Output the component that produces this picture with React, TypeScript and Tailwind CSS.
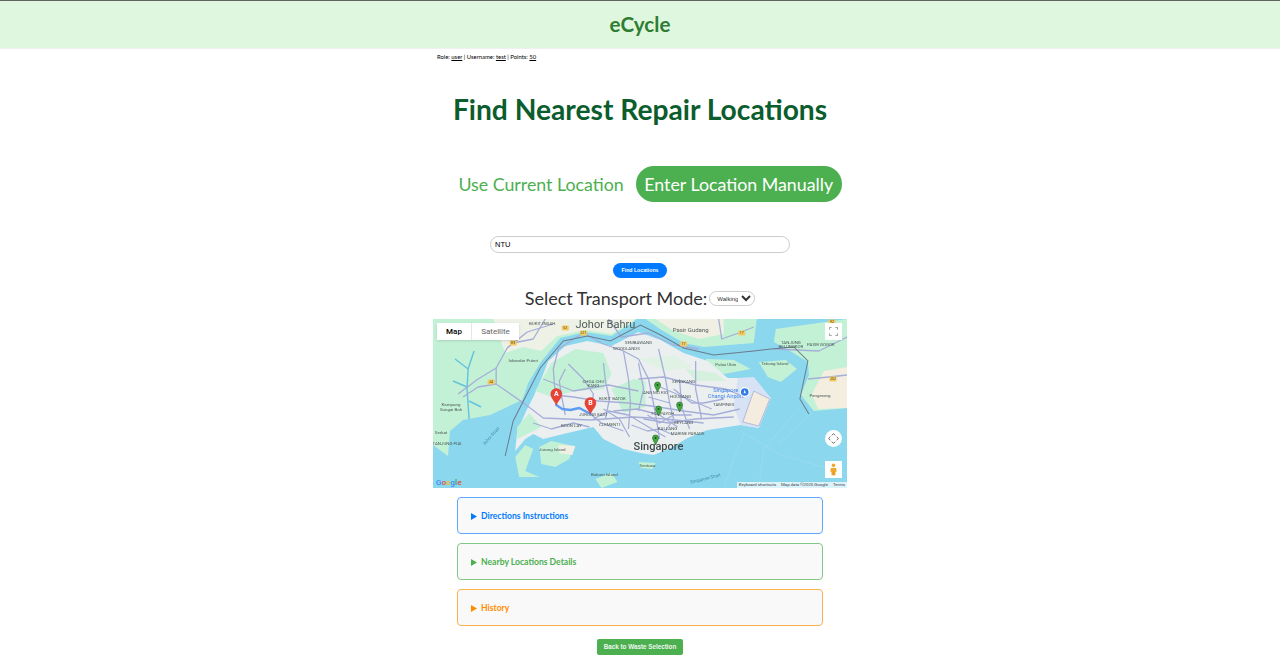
import React from "react";

const LAND = "#c3f1d6";
const URBAN = "#eceff0";
const WATER = "#8bd7ee";
const ROAD = "#a6aed8";

// small map labels: x, y, text
const labels: [number, number, string][] = [
  [109, 6, "BUKIT INDAH"],
  [90, 43, "Iskandar Puteri"],
  [18, 87, "Kampong"],
  [18, 92, "Sungai Boh"],
  [14, 126, "TANJUNG PIAI"],
  [8, 115, "Serkat"],
  [119, 132, "Jurong Island"],
  [171, 157, "Bukom Island"],
  [138, 108, "BOON LAY"],
  [160, 97, "JURONG EAST"],
  [176, 107, "CLEMENTI"],
  [179, 81, "BUKIT BATOK"],
  [160, 64, "CHOA CHU"],
  [160, 68, "KANG"],
  [193, 31, "WOODLANDS"],
  [205, 25, "SEMBAWANG"],
  [292, 47, "Pulau Ubin"],
  [341, 46, "Tekong Island"],
  [357, 25, "TANJUNG"],
  [357, 29, "BELUNGKOR"],
  [387, 27, "PASIR GOGOK"],
  [386, 78, "Pengerang"],
  [290, 87, "TAMPINES"],
  [250, 64, "SENGKANG"],
  [247, 79, "HOUGANG"],
  [222, 75, "ANG MO KIO"],
  [229, 96, "TOA PAYOH"],
  [250, 105, "GEYLANG"],
  [234, 111, "KALLANG"],
  [254, 116, "MARINE PARADE"],
  [214, 148, "Sentosa"],
];

const shields: [number, number, string][] = [
  [132, 9, "52"],
  [150, 14, "J21"],
  [80, 24, "E3"],
  [58, 63, "J4"],
  [308, 14, "17"],
  [250, 25, "17"],
  [398, 3, "92"],
  [399, 60, "J52"],
];

const roads = [
  "M120 5 L94 13 L74 29 L63 49 L63 65 L93 86 L110 99 L157 101 L200 98 L232 100 L270 104",
  "M63 49 L45 60 L25 75",
  "M63 65 L45 68 L30 78",
  "M112 0 L100 20 L80 24 L74 29",
  "M150 14 L125 30 L120 50 L122 76",
  "M150 14 L170 25 L190 32 L205 40 L215 60 L222 95 L226 120",
  "M135 45 L150 60 L160 75 L157 95 L168 104 L190 112",
  "M122 76 L140 78 L165 82 L195 84 L225 88 L250 92 L280 96 L306 90",
  "M190 32 L195 60 L197 84 L195 110",
  "M205 60 L230 58 L262 66 L292 70 L306 76",
  "M246 60 L248 88 L256 110",
  "M222 66 L250 78 L278 90",
  "M210 100 L235 104 L262 100 L300 98",
  "M175 0 L188 18 L215 14 L240 26 L265 30",
  "M285 0 L288 20 L305 14 L320 8",
  "M110 60 L140 72 L175 66 L205 72",
  "M170 90 L186 100 L196 118",
  "M160 100 L175 92 L195 96 L215 108 L232 118",
  "M215 78 L236 84 L240 100 L232 112",
  "M340 30 L385 32 L413 18",
  "M374 60 L395 58 L413 56",
  "M132 50 L126 62 L128 76 L132 96",
  "M170 44 L172 62 L176 80 L172 100",
  "M205 44 L210 70 L205 92",
  "M225 30 L232 60 L236 84",
  "M262 42 L262 70 L268 100",
  "M180 92 L204 90 L226 96 L244 108",
  "M214 96 L226 104 L240 96 L258 96",
  "M198 106 L214 112 L226 110 L240 116",
  "M240 70 L258 84 L270 84 L290 80",
  "M100 104 L118 110 L140 104 L156 108",
];

const MapArt = () => (
  <svg viewBox="0 0 413 169" preserveAspectRatio="none" className="block h-full w-full blur-[0.4px]" fontFamily="Roboto, sans-serif">
    <rect width="413" height="169" fill={WATER} />
    {/* johor side */}
    <path d="M0 0 L203 0 L200 3 L178 17 L152 13 L127 19 L107 44 L95 64 L89 81 L57 96 L30 101 L17 112 L15 137 L0 126 Z" fill={LAND} />
    <path d="M60 0 L202 0 L198 3 L178 15 L152 11 L124 17 L108 32 L90 28 L72 34 Z" fill="#eef1e6" />
    <path d="M212 0 L323 0 L320 24 L270 28 L250 24 L228 11 Z" fill={LAND} />
    <path d="M222 0 L290 0 L290 15 L265 20 L240 12 Z" fill="#f0efe4" />
    <path d="M342 10 L413 0 L413 89 L380 92 L367 76 L375 56 L374 43 L353 30 L340 23 Z" fill={LAND} />
    <path d="M390 52 L413 48 L413 89 L384 90 L378 75 Z" fill="#f3eee0" />
    <path d="M41 32 L35 50 L34 70 L36 100 M35 50 L22 40 M34 68 L20 62 M36 82 L48 88" fill="none" stroke="#62c3da" strokeWidth="1.4" />
    {/* islands */}
    <path d="M272 40 L300 41 L317 50 L290 55 L276 50 Z" fill={LAND} />
    <path d="M325 43 L352 41 L363 50 L347 63 L334 58 Z" fill={LAND} />
    {/* singapore */}
    <path d="M82 132 L84 112 L93 92 L101 76 L108 60 L115 42 L132 27 L154 22 L178 27 L205 13 L227 21 L250 34 L274 42 L294 59 L317 59 L337 79 L325 109 L307 106 L274 111 L254 119 L237 129 L220 136 L207 134 L190 130 L170 120 L160 108 L130 115 L110 120 L100 115 L92 120 Z" fill={URBAN} />
    <path d="M102 72 L118 44 L142 30 L170 34 L178 55 L170 70 L142 72 L118 78 Z" fill={LAND} />
    <path d="M178 70 L200 60 L212 62 L212 88 L190 94 Z" fill={LAND} />
    <path d="M84 120 L84 108 L96 94 L108 108 L100 112 Z" fill={LAND} />
    <path d="M205 40 L240 36 L258 48 L232 52 Z" fill="#dff2e4" />
    <path d="M252 50 L282 54 L292 62 L262 62 Z" fill="#d5f0dd" />
    <path d="M106 128 L118 122 L140 127 L136 140 L122 148 L108 145 Z" fill={LAND} />
    <path d="M125 126 L142 127 L139 136 L126 134 Z" fill="#f0efe4" />
    <path d="M82 138 L92 126 L100 130 L92 152 L106 158 L86 158 Z" fill={LAND} />
    <path d="M162 160 L178 154 L184 163 L168 169 Z" fill={LAND} />
    <path d="M205 143 L222 144 L219 150 L207 149 Z" fill={LAND} />
    <path d="M304 59 L320 58 L337 79 L325 109 L307 106 L300 88 Z" fill="#d7e3f4" />
    <path d="M320 72 L336 80 L325 107 L309 103 Z" fill="#f3ecdf" stroke="#a6aed8" strokeWidth="0.8" />
    {roads.map((d, i) => (
      <path key={i} d={d} fill="none" stroke={ROAD} strokeWidth="1.3" strokeLinejoin="round" />
    ))}
    {/* ferry lines */}
    <path d="M307 112 L345 135 L413 155 M310 115 L300 140 L290 169 M360 95 L330 130 L325 169 M380 92 L345 125" fill="none" stroke="#a3def0" strokeWidth="0.6" />
    {/* border */}
    <path d="M72 137 L80 102 L107 49 L130 22 L154 17 L177 22 L207 6 L227 16 L250 29 L280 36 L320 32 L337 30 L360 28 L374 42 L366 80 L375 95" fill="none" stroke="#6a7b8c" strokeWidth="1" />
    {labels.map(([x, y, t]) => (
      <text key={t} x={x} y={y} fontSize="4.4" textAnchor="middle" fill="#4d5a58">{t}</text>
    ))}
    {shields.map(([x, y, t]) => (
      <g key={`${x}-${t}`}>
        <rect x={x - 3.5} y={y - 2.5} width="7" height="5" rx="1" fill="#f4cb62" />
        <text x={x} y={y + 1.4} fontSize="3.6" textAnchor="middle" fill="#5a4a20">{t}</text>
      </g>
    ))}
    <text x="172" y="9" fontSize="11" textAnchor="middle" fill="#4f5b5a">Johor Bahru</text>
    <text x="257" y="13" fontSize="6" textAnchor="middle" fill="#4f5b5a">Pasir Gudang</text>
    <text x="225" y="131" fontSize="11" fontWeight="500" textAnchor="middle" fill="#3f4a4a">Singapore</text>
    <text x="292" y="73" fontSize="5.6" textAnchor="middle" fill="#3f83e8">Singapore</text>
    <text x="292" y="79" fontSize="5.6" textAnchor="middle" fill="#3f83e8">Changi Airport</text>
    <circle cx="311" cy="73" r="5" fill="#fff" />
    <circle cx="311" cy="73" r="3.8" fill="#2f7be5" />
    <path d="M311 70.5 L312.2 74.5 L311 74 L309.8 74.5 Z" fill="#fff" />
    <text transform="translate(59 118) rotate(-48)" fontSize="4.4" textAnchor="middle" fill="#3d8ba5">Johor Strait</text>
    <text transform="translate(272 161) rotate(-14)" fontSize="4.4" textAnchor="middle" fill="#3d8ba5">Singapore Strait</text>
    {/* route */}
    <path d="M123 86 L129 90 L137 91 L146 89 L157 95" fill="none" stroke="#5f9df2" strokeWidth="2.4" strokeLinejoin="round" strokeLinecap="round" />
    {/* green markers */}
    {[
      [224, 67],
      [225, 91],
      [246, 87],
      [222, 120],
    ].map(([x, y]) => (
      <g key={`${x}-${y}`}>
        <path d={`M${x} ${y + 6} C${x - 1} ${y + 3} ${x - 3} ${y + 1} ${x - 3} ${y - 1} A3 3 0 1 1 ${x + 3} ${y - 1} C${x + 3} ${y + 1} ${x + 1} ${y + 3} ${x} ${y + 6} Z`} fill="#3fae3c" stroke="#2b5a33" strokeWidth="0.6" />
        <circle cx={x} cy={y - 1} r="1" fill="#1f4d28" />
      </g>
    ))}
    {/* route pins */}
    {[
      [123, 76, "A"],
      [157, 85, "B"],
    ].map(([x, y, t]) => {
      const px = x as number;
      const py = y as number;
      return (
        <g key={t as string}>
          <path d={`M${px} ${py + 10} C${px - 1.5} ${py + 6} ${px - 5.5} ${py + 3} ${px - 5.5} ${py - 1} A5.5 5.5 0 1 1 ${px + 5.5} ${py - 1} C${px + 5.5} ${py + 3} ${px + 1.5} ${py + 6} ${px} ${py + 10} Z`} fill="#ea4335" stroke="#c5221f" strokeWidth="0.4" />
          <text x={px} y={py + 1.5} fontSize="7" fontWeight="700" textAnchor="middle" fill="#fff">{t}</text>
        </g>
      );
    })}
    <text x="3" y="166" fontSize="8" fontWeight="500">
      <tspan fill="#4285f4">G</tspan>
      <tspan fill="#ea4335">o</tspan>
      <tspan fill="#fbbc05">o</tspan>
      <tspan fill="#4285f4">g</tspan>
      <tspan fill="#34a853">l</tspan>
      <tspan fill="#ea4335">e</tspan>
    </text>
  </svg>
);

const MapControls = () => (
  <>
    <div className="absolute left-[4px] top-[4px] flex h-[17px] w-[82px] bg-white text-[8px] font-['Roboto',sans-serif] shadow-sm">
      <div className="flex w-[35px] items-center justify-center border-r border-[#e6e6e6] font-medium text-black">Map</div>
      <div className="flex flex-1 items-center justify-center text-[#666]">Satellite</div>
    </div>
    <div className="absolute right-[5px] top-[4px] flex h-[17px] w-[17px] items-center justify-center bg-white">
      <svg viewBox="0 0 10 10" className="h-[9px] w-[9px]" fill="none" stroke="#888" strokeWidth="0.9">
        <path d="M.5 3V.5H3M7 .5h2.5V3M9.5 7v2.5H7M3 9.5H.5V7" />
      </svg>
    </div>
    <div className="absolute right-[5px] top-[111px] flex h-[17px] w-[17px] items-center justify-center rounded-full bg-white">
      <svg viewBox="0 0 12 12" className="h-[11px] w-[11px]" fill="none" stroke="#666" strokeWidth="1">
        <path d="M4 2.5L6 .8l2 1.7M4 9.5l2 1.7 2-1.7M2.5 4L.8 6l1.7 2M9.5 4l1.7 2-1.7 2" />
      </svg>
    </div>
    <div className="absolute right-[5px] top-[142px] flex h-[17px] w-[17px] items-center justify-center bg-white">
      <svg viewBox="0 0 10 14" className="h-[13px] w-[9px]">
        <circle cx="5" cy="2.4" r="2" fill="#f2a72e" />
        <path d="M2 5.2h6l.6 4.3H7.2V13.5H2.8V9.5H1.4Z" fill="#f2a72e" />
        <path d="M5 9v4.5" stroke="#c9821a" strokeWidth=".6" />
      </svg>
    </div>
    <div className="absolute bottom-0 right-0 flex h-[6px] items-center gap-[5px] bg-white/70 px-[2px] text-[4.3px] leading-none text-[#444] font-['Roboto',sans-serif]">
      <span>Keyboard shortcuts</span>
      <span>Map data ©2025 Google</span>
      <span>Terms</span>
    </div>
  </>
);

const Panel = ({ title, box, text }: { title: string; box: string; text: string }) => (
  <details className={`w-[366px] rounded-[4px] border bg-[#f9f9f9] ${box}`}>
    <summary className={`flex list-none items-center gap-[4px] px-[13px] pt-[12px] pb-[10px] text-[8.6px] leading-[13px] font-bold ${text}`}>
      <svg viewBox="0 0 6 7" className="h-[7px] w-[6px]" fill="currentColor">
        <path d="M0 0L6 3.5L0 7Z" />
      </svg>
      {title}
    </summary>
  </details>
);

export default function App() {
  return (
    <div className="flex min-h-[668px] flex-col items-center bg-white font-['Lato',sans-serif]">
      <header className="flex h-[48px] w-full items-center justify-center border-t border-[#5f6360] bg-[#dff7df] shadow-[0_1px_1px_rgba(0,0,0,0.06)]">
        <h1 className="text-[20.6px] font-bold text-[#2e7d32]">eCycle</h1>
      </header>

      <div className="flex w-[414px] flex-col items-center">
        <p className="mt-[4px] self-start pl-[4px] text-[5.9px] leading-[9px] text-black">
          Role: <u>user</u> | Username: <u>test</u> | Points: <u>50</u>
        </p>

        <h2 className="mt-[28px] text-[28.2px] leading-[40px] font-bold whitespace-nowrap text-[#0b5d2e]">Find Nearest Repair Locations</h2>

        <div className="mt-[37px] ml-[12px] flex items-center gap-[4px]">
          <button className="px-[8px] text-[17.8px] leading-[36px] whitespace-nowrap text-[#4caf50]">Use Current Location</button>
          <button className="h-[36px] rounded-full bg-[#4caf50] px-[8.5px] text-[17.8px] whitespace-nowrap text-white">Enter Location Manually</button>
        </div>

        <input
          readOnly
          value="NTU"
          className="mt-[34px] h-[17px] w-[300px] rounded-full border border-[#cccccc] px-[4px] text-[7.5px] text-black font-['Liberation_Sans',sans-serif] outline-none"
        />

        <button className="mt-[10px] h-[15px] w-[54px] rounded-full bg-[#007bff] text-[5.2px] font-bold text-white font-['Liberation_Sans',sans-serif]">Find Locations</button>

        <div className="mt-[12px] flex h-[17px] items-center gap-[2px]">
          <label className="text-[18px] text-[#333333]">Select Transport Mode:</label>
          <select className="h-[15px] w-[46px] rounded-full border border-[#cccccc] pl-[3px] text-[6px] text-[#333] font-['Liberation_Sans',sans-serif]">
            <option>Walking</option>
          </select>
        </div>

        <div className="relative mt-[12px] h-[169px] w-[414px] overflow-hidden">
          <MapArt />
          <MapControls />
        </div>

        <div className="mt-[9px] flex flex-col gap-[9px]">
          <Panel title="Directions Instructions" box="border-[#5aa9ff]" text="text-[#007bff]" />
          <Panel title="Nearby Locations Details" box="border-[#82c785]" text="text-[#4caf50]" />
          <Panel title="History" box="border-[#ffb14d]" text="text-[#ff8c00]" />
        </div>

        <button className="mt-[13px] h-[16px] w-[86px] rounded-[2px] bg-[#4caf50] text-[6.3px] font-bold text-[#eef8ee] font-['Liberation_Sans',sans-serif]">Back to Waste Selection</button>
      </div>
    </div>
  );
}
